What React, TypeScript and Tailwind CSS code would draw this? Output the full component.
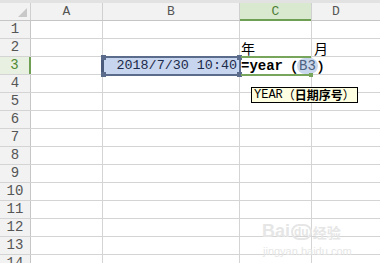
import React from 'react';

const rows = Array.from({ length: 14 }, (_, i) => i + 1);

const mono = { fontFamily: '"Liberation Mono", "Noto Sans CJK SC", monospace' };
const cjk = { fontFamily: '"Noto Sans CJK SC", sans-serif' };

function Cell({ w, children, className = '' }: { w: string; children?: React.ReactNode; className?: string }) {
  return (
    <div className={`${w} shrink-0 h-full border-r border-[#d4d4d4] flex items-end overflow-visible whitespace-nowrap ${className}`}>
      {children}
    </div>
  );
}

export default function App() {
  return (
    <div className="relative w-[380px] h-[263px] overflow-hidden bg-white text-[#222]" style={mono}>
      {/* top strip */}
      <div className="h-[3px] bg-[#e2e2e2]" />

      {/* column header */}
      <div className="flex h-[18px] bg-[#f2f2f2] border-b border-[#c6c6c6] text-[13px] text-[#555]">
        <div className="w-[31px] shrink-0 border-r border-[#d0d0d0] relative">
          <div className="absolute right-[3px] bottom-[3px] w-0 h-0 border-l-[9px] border-l-transparent border-b-[9px] border-b-[#c8c8c8]" />
        </div>
        <div className="w-[72px] shrink-0 border-r border-[#d0d0d0] flex items-center justify-center">A</div>
        <div className="w-[137px] shrink-0 border-r border-[#d0d0d0] flex items-center justify-center">B</div>
        <div className="w-[72px] shrink-0 border-r border-[#d0d0d0] flex items-center justify-center bg-[#d9e9cf] text-[#4e7d36] relative">
          C
          <div className="absolute left-0 right-0 -bottom-[1px] h-[2px] bg-[#6e9f53]" />
        </div>
        <div className="flex-1 flex items-center justify-center pr-[20px]">D</div>
      </div>

      {/* rows */}
      {rows.map((r) => (
        <div key={r} className="flex h-[18px] border-b border-[#d4d4d4] text-[14px]">
          <div
            className={`w-[31px] shrink-0 h-full flex items-center justify-center text-[14px] ${
              r === 3 ? 'text-[#4e8a34] border-r-2 border-[#6e9f53] bg-[#e8f0e2]' : 'text-[#555] border-r border-[#c6c6c6] bg-[#f2f2f2]'
            }`}
          >
            {r}
          </div>
          <Cell w="w-[72px]" />
          <Cell w="w-[137px]" className={r === 3 ? 'bg-[#c7d6ee] justify-end pr-[2px] text-[#1d2a4a] text-[13.4px]' : ''}>
            {r === 3 && <span className="leading-[16px]">2018/7/30 10:40</span>}
          </Cell>
          <Cell w="w-[72px]" className="pl-[1px]">
            {r === 2 && <span className="leading-[16px] text-[14px] text-black" style={cjk}>年</span>}
            {r === 3 && (
              <span className="leading-[16px] text-black font-bold text-[14px] flex items-center">
                =year
                <span className="font-bold" style={cjk}>（</span>
                <span className="font-normal text-[#4d6180] bg-[#c9d7ec] rounded-full px-[2px]">B3</span>
                <span className="font-bold" style={cjk}>）</span>
              </span>
            )}
          </Cell>
          <div className="flex-1 h-full flex items-end pl-[2px]">
            {r === 2 && <span className="leading-[16px] text-[14px] text-black" style={cjk}>月</span>}
          </div>
        </div>
      ))}

      {/* selection around B3 */}
      <div className="absolute left-[102px] top-[56px] w-[139px] h-[20px] border-2 border-[#5a6b8c] pointer-events-none">
        <div className="absolute -left-[3px] -top-[3px] w-[5px] h-[5px] bg-[#5a6b8c]" />
        <div className="absolute -right-[3px] -top-[3px] w-[5px] h-[5px] bg-[#5a6b8c]" />
        <div className="absolute -left-[3px] -bottom-[3px] w-[5px] h-[5px] bg-[#5a6b8c]" />
        <div className="absolute -right-[3px] -bottom-[3px] w-[5px] h-[5px] bg-[#5a6b8c]" />
        <div className="absolute -left-[3px] top-[2px] w-[3px] h-[12px] bg-[#4a5b7c]" />
      </div>

      {/* active cell C3 */}
      <div className="absolute left-[241px] top-[56px] w-[70px] h-[2px] bg-[#77a55c]" />
      <div className="absolute left-[241px] top-[74px] w-[70px] h-[2px] bg-[#77a55c]" />
      <div className="absolute left-[309px] top-[73px] w-[4px] h-[4px] bg-[#77a55c]" />

      {/* tooltip */}
      <div className="absolute left-[251px] top-[87px] h-[16px] px-[2px] flex items-center bg-[#ffffe1] border border-black text-[12px] text-black leading-none">
        <span>YEAR</span>
        <span style={cjk}>（</span>
        <span className="font-bold" style={cjk}>日期序号</span>
        <span style={cjk}>）</span>
      </div>

      {/* watermark */}
      <div className="absolute left-[262px] top-[222px] text-[#e6e6e6] pointer-events-none" style={{ fontFamily: '"Liberation Sans", "Noto Sans CJK SC", sans-serif' }}>
        <div className="flex items-end leading-none">
          <span className="text-[18px] font-bold">Bai</span>
          <span className="text-[12px] font-bold border-2 border-[#e6e6e6] rounded-full px-[1px] mx-[1px]">du</span>
          <span className="text-[14px] font-bold">经验</span>
        </div>
        <div className="text-[11px] mt-[3px] ml-[1px]">jingyan.baidu.com</div>
      </div>
    </div>
  );
}
